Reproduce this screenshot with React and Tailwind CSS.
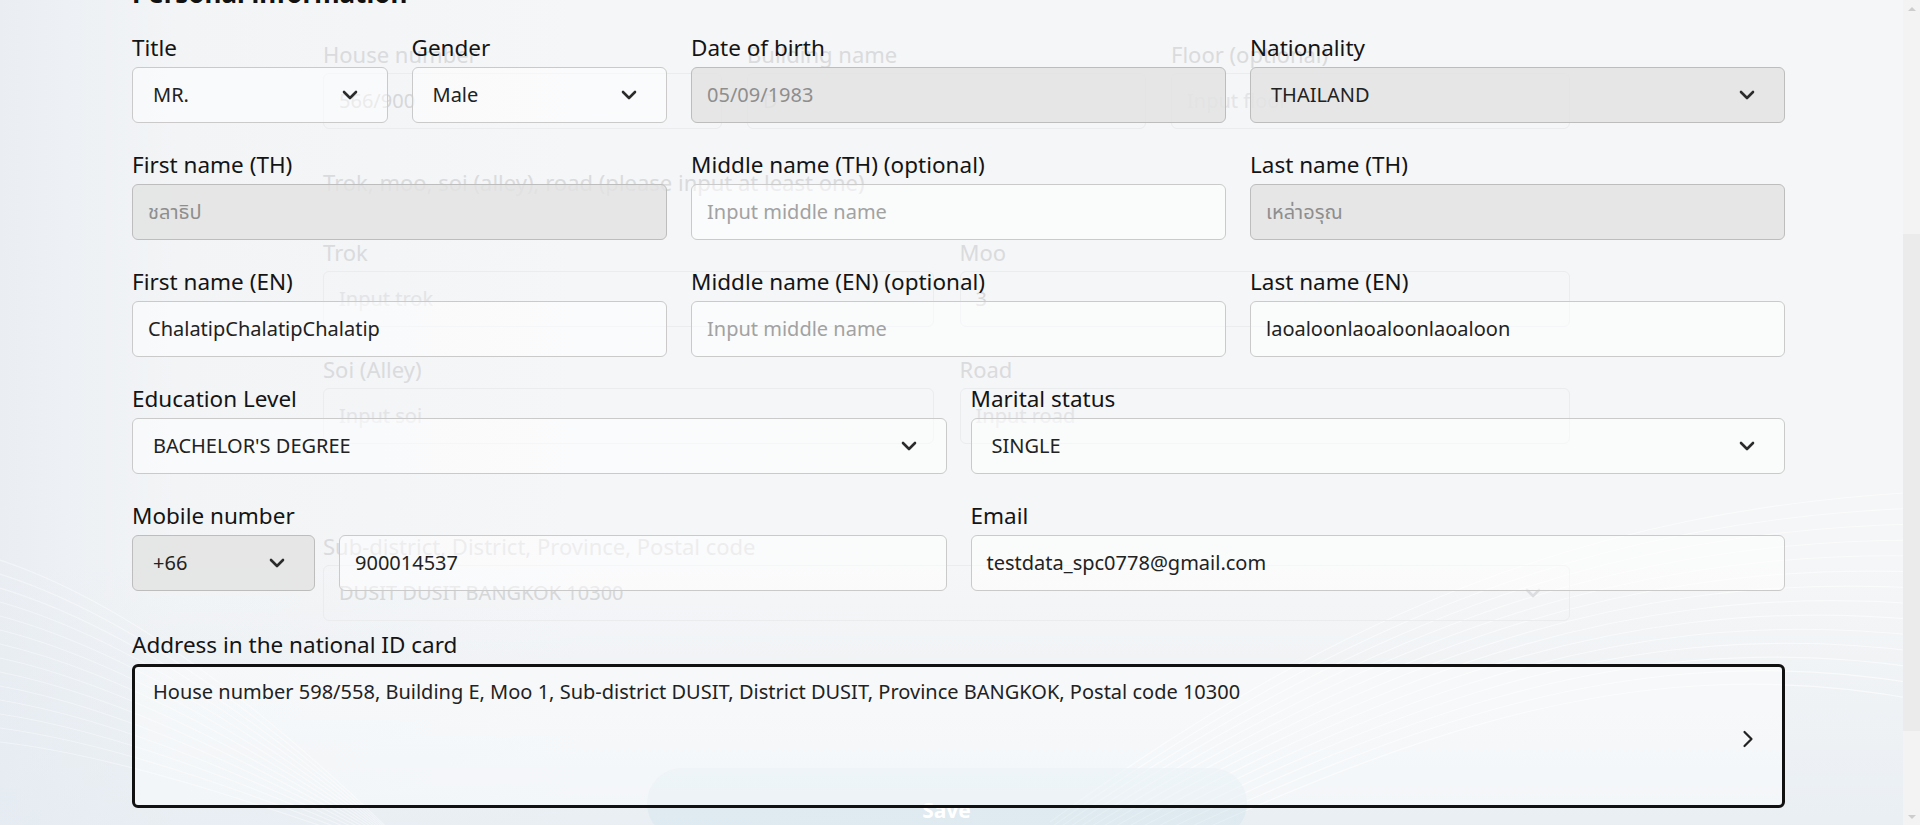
import React from "react";

const font = "font-['Noto_Sans','Noto_Sans_Thai','Liberation_Sans',sans-serif]";

function ChevronDown({ className = "" }) {
  return (
    <svg viewBox="0 0 16 10" width="16" height="10" fill="none" className={className}>
      <path d="M2 2l6 6 6-6" stroke="currentColor" strokeWidth="2.6" strokeLinecap="round" strokeLinejoin="round" />
    </svg>
  );
}

function ChevronRight({ className = "" }) {
  return (
    <svg viewBox="0 0 12 18" width="12" height="18" fill="none" className={className}>
      <path d="M2.5 2l7 7-7 7" stroke="currentColor" strokeWidth="2.2" strokeLinecap="round" strokeLinejoin="round" />
    </svg>
  );
}

function Label({ children }) {
  return (
    <div className="mb-[5px] whitespace-nowrap text-[22.5px] leading-[28px] text-[#141414]">{children}</div>
  );
}

function Input({ value, placeholder, disabled }) {
  return (
    <div
      className={`flex h-[56px] items-center rounded-[6px] border px-[15px] text-[20px] ${
        disabled ? "border-[#bdbdbd] bg-[#e2e2e2]/80 text-[#8e8e8e]" : "border-[#cacaca] bg-white/50 text-[#222222]"
      }`}
    >
      {value ? value : <span className="text-[#a2a2a2]">{placeholder}</span>}
    </div>
  );
}

function Select({ value, disabled }) {
  return (
    <div
      className={`flex h-[56px] items-center justify-between rounded-[6px] border pl-[20px] pr-[29px] text-[20px] text-[#222222] ${
        disabled ? "border-[#bdbdbd] bg-[#e2e2e2]/80" : "border-[#cacaca] bg-white/50"
      }`}
    >
      <span>{value}</span>
      <ChevronDown className="text-[#2b2b2b]" />
    </div>
  );
}

function Field({ label, children, className = "" }) {
  return (
    <div className={className}>
      <Label>{label}</Label>
      {children}
    </div>
  );
}

// faded address form lying behind the personal info form
function GhostLabel({ children }) {
  return <div className="mb-[5px] whitespace-nowrap text-[22px] leading-[28px] text-[#dadbdd]">{children}</div>;
}

function GhostBox({ children, light }) {
  return (
    <div
      className={`flex h-[56px] items-center justify-between rounded-[6px] border border-[#ebecee] px-[15px] text-[20px] ${
        light ? "text-[#e3e4e6]" : "text-[#d6d7d9]"
      }`}
    >
      {children}
    </div>
  );
}

function GhostForm() {
  return (
    <div className="pointer-events-none absolute inset-0">
      <div className="absolute left-[323px] top-[40px] w-[1247px]">
        <div className="grid grid-cols-3 gap-x-[25px]">
          <div>
            <GhostLabel>House number</GhostLabel>
            <GhostBox>566/900</GhostBox>
          </div>
          <div>
            <GhostLabel>Building name</GhostLabel>
            <GhostBox>D</GhostBox>
          </div>
          <div>
            <GhostLabel>Floor (optional)</GhostLabel>
            <GhostBox light>Input floor</GhostBox>
          </div>
        </div>
        <div className="mt-[39px] text-[22px] leading-[28px] text-[#dadbdd]">
          Trok, moo, soi (alley), road (please input at least one)
        </div>
        <div className="mt-[42px] grid grid-cols-2 gap-x-[26px] gap-y-[28px]">
          <div>
            <GhostLabel>Trok</GhostLabel>
            <GhostBox light>Input trok</GhostBox>
          </div>
          <div>
            <GhostLabel>Moo</GhostLabel>
            <GhostBox>3</GhostBox>
          </div>
          <div>
            <GhostLabel>Soi (Alley)</GhostLabel>
            <GhostBox light>Input soi</GhostBox>
          </div>
          <div>
            <GhostLabel>Road</GhostLabel>
            <GhostBox light>Input road</GhostBox>
          </div>
        </div>
        <div className="mt-[88px]">
          <GhostLabel>Sub-district, District, Province, Postal code</GhostLabel>
          <GhostBox>
            <span>DUSIT DUSIT BANGKOK 10300</span>
            <ChevronDown className="mr-[13px] text-[#dcdde0]" />
          </GhostBox>
        </div>
        <div className="mx-auto mt-[147px] flex h-[70px] w-[600px] justify-center rounded-[44px] bg-[#d3e6ee]/50 pt-[28px] text-[21px] font-bold leading-[28px] text-white">
          Save
        </div>
      </div>
    </div>
  );
}

function Waves() {
  const lines = Array.from({ length: 14 }, (_, i) => i);
  return (
    <svg className="pointer-events-none absolute inset-0" width="1920" height="825" viewBox="0 0 1920 825" fill="none">
      {lines.map((i) => (
        <path
          key={"r" + i}
          d={`M1050 ${900 - i * 6} C1350 ${760 - i * 12}, 1600 ${640 - i * 10}, 1920 ${700 - i * 16}`}
          stroke="#ffffff"
          strokeOpacity="0.55"
          strokeWidth="1.2"
        />
      ))}
      {lines.map((i) => (
        <path
          key={"l" + i}
          d={`M0 ${560 + i * 14} C120 ${600 + i * 12}, 260 ${700 + i * 8}, 420 ${860}`}
          stroke="#ffffff"
          strokeOpacity="0.4"
          strokeWidth="1.2"
        />
      ))}
    </svg>
  );
}

function Scrollbar() {
  return (
    <div className="absolute right-0 top-0 flex h-[825px] w-[17px] flex-col bg-[#f3f3f3]">
      <div className="flex h-[17px] items-center justify-center">
        <div className="h-0 w-0 border-x-[4px] border-b-[4px] border-x-transparent border-b-[#cdcdcd]" />
      </div>
      <div className="mt-[217px] h-[497px] w-full bg-[#ebebeb]" />
      <div className="flex-1" />
      <div className="flex h-[17px] items-center justify-center">
        <div className="h-0 w-0 border-x-[4px] border-t-[4px] border-x-transparent border-t-[#cdcdcd]" />
      </div>
    </div>
  );
}

export default function App() {
  return (
    <div
      className={`relative h-[825px] w-[1920px] overflow-hidden bg-[linear-gradient(90deg,#eaeef3_0%,#f2f4f6_9%,#f5f6f8_30%,#f5f6f7_100%)] ${font}`}
    >
      <div className="pointer-events-none absolute inset-x-0 bottom-0 h-[260px] bg-[linear-gradient(180deg,rgba(230,237,243,0)_0%,rgba(226,234,241,0.6)_100%)]" />
      <Waves />
      <GhostForm />

      <div className="relative z-10 w-[1785px] pl-[132px]">
        <h2 className="mb-[24px] mt-[-24px] h-[34px] text-[26px] font-bold leading-[34px] text-[#111111]">
          Personal information
        </h2>

        <div className="grid grid-cols-3 gap-x-6 gap-y-[28px]">
          <div className="grid grid-cols-2 gap-x-6">
            <Field label="Title">
              <Select value="MR." />
            </Field>
            <Field label="Gender">
              <Select value="Male" />
            </Field>
          </div>
          <Field label="Date of birth">
            <Input value="05/09/1983" disabled />
          </Field>
          <Field label="Nationality">
            <Select value="THAILAND" disabled />
          </Field>

          <Field label="First name (TH)">
            <Input value="ชลาธิป" disabled />
          </Field>
          <Field label="Middle name (TH) (optional)">
            <Input placeholder="Input middle name" />
          </Field>
          <Field label="Last name (TH)">
            <Input value="เหล่าอรุณ" disabled />
          </Field>

          <Field label="First name (EN)">
            <Input value="ChalatipChalatipChalatip" />
          </Field>
          <Field label="Middle name (EN) (optional)">
            <Input placeholder="Input middle name" />
          </Field>
          <Field label="Last name (EN)">
            <Input value="laoaloonlaoaloonlaoaloon" />
          </Field>
        </div>

        <div className="mt-[28px] grid grid-cols-2 gap-x-6 gap-y-[28px]">
          <Field label="Education Level">
            <Select value="BACHELOR'S DEGREE" />
          </Field>
          <Field label="Marital status">
            <Select value="SINGLE" />
          </Field>
          <Field label="Mobile number">
            <div className="flex gap-6">
              <div className="w-[183px] shrink-0">
                <Select value="+66" disabled />
              </div>
              <div className="flex-1">
                <Input value="900014537" />
              </div>
            </div>
          </Field>
          <Field label="Email">
            <Input value="testdata_spc0778@gmail.com" />
          </Field>
        </div>

        <div className="mt-[40px]">
          <Label>Address in the national ID card</Label>
          <div className="flex h-[144px] justify-between rounded-[6px] border-[3px] border-[#111111] bg-white/45 pl-[18px] pr-[28px] pt-[11px] text-[20px] text-[#222222]">
            <span className="leading-[28px]">
              House number 598/558, Building E, Moo 1, Sub-district DUSIT, District DUSIT, Province BANGKOK, Postal code 10300
            </span>
            <ChevronRight className="mt-[52px] text-[#222222]" />
          </div>
        </div>
      </div>

      <Scrollbar />
    </div>
  );
}
